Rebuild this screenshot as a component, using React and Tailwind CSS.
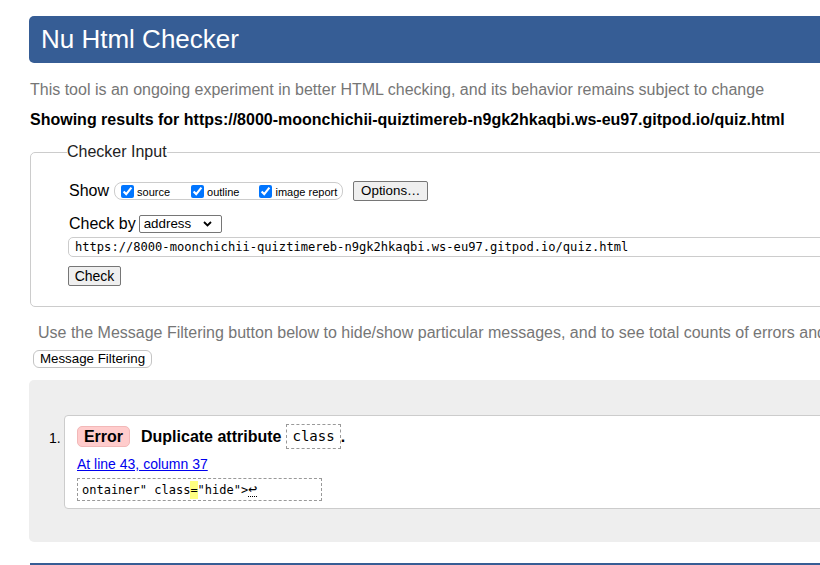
import React from "react";

const sans = { fontFamily: '"Liberation Sans", Arial, sans-serif' };
const mono = "font-['DejaVu_Sans_Mono','Liberation_Mono',monospace]";
const url = "https://8000-moonchichii-quiztimereb-n9gk2hkaqbi.ws-eu97.gitpod.io/quiz.html";

const Check = ({ label, className = "" }) => (
  <label className={`flex items-center ${className}`}>
    <input type="checkbox" defaultChecked className="h-[13px] w-[13px] accent-[#0075ff]" />
    <span className="ml-[3px] pt-[2px] text-[11px] leading-[13px] text-black">{label}</span>
  </label>
);

const NativeButton = ({ children, className = "" }) => (
  <button
    type="button"
    className={`flex h-[20px] items-center justify-center rounded-[2px] border border-[#767676] bg-[#efefef] text-[13.33px] text-black ${className}`}
  >
    {children}
  </button>
);

export default function App() {
  return (
    <div className="h-[565px] w-[820px] overflow-hidden bg-white text-black" style={sans}>
      <div className="ml-[29px] w-[920px]">
        {/* Title bar */}
        <h1 className="mt-[16px] flex h-[47px] items-center rounded-[5px] bg-[#365d95] pl-[12px] text-[26px] font-normal text-white">
          Nu Html Checker
        </h1>

        <p className="mt-[17px] ml-[1px] text-[16px] leading-[20px] text-[#767676]">
          This tool is an ongoing experiment in better HTML checking, and its behavior remains subject to change
        </p>
        <p className="mt-[10px] ml-[1px] text-[16px] font-bold leading-[20px] text-black">
          Showing results for {url}
        </p>

        {/* Checker input */}
        <fieldset className="mt-[13px] ml-[1px] rounded-[5px] border border-[#cccccc] pb-[20px] pl-[37px]">
          <legend className="-ml-[1px] text-[16px] leading-[18px] text-[#222]">Checker Input</legend>

          <div className="mt-[20px] flex h-[20px] items-center">
            <span className="ml-[1px] text-[16px] leading-[20px]">Show</span>
            <div className="ml-[5px] flex h-[18px] items-center rounded-[8px] border border-[#cccccc] pr-[5px] pl-[6px]">
              <Check label="source" />
              <Check label="outline" className="ml-[21px]" />
              <Check label="image report" className="ml-[20px]" />
            </div>
            <NativeButton className="ml-[10px] w-[75px]">Options…</NativeButton>
          </div>

          <div className="mt-[14px] flex h-[18px] items-center">
            <span className="ml-[1px] text-[16px] leading-[20px]">Check by</span>
            <div className="ml-[3px] flex h-[18px] w-[83px] items-center justify-between rounded-[2px] border border-[#767676] bg-white pr-[9px] pl-[4px] text-[13.33px]">
              <span>address</span>
              <svg width="9" height="6" viewBox="0 0 9 6" fill="none">
                <path d="M1 1 L4.5 4.5 L8 1" stroke="#000" strokeWidth="1.8" />
              </svg>
            </div>
          </div>

          <div className={`mt-[4px] flex h-[20px] items-center rounded-l-[5px] border border-[#cccccc] pl-[6px] text-[12.1px] ${mono}`}>
            {url}
          </div>

          <NativeButton className="mt-[9px] w-[53px] text-[14px]">Check</NativeButton>
        </fieldset>

        <p className="mt-[16px] ml-[9px] whitespace-nowrap text-[16px] leading-[20px] text-[#767676]">
          Use the Message Filtering button below to hide/show particular messages, and to see total counts of errors and warnings.
        </p>
        <button
          type="button"
          className="mt-[7px] ml-[4px] flex h-[18px] w-[119px] items-center justify-center rounded-[6px] border border-[#c4c4c4] bg-white text-[13.33px] text-black"
        >
          Message Filtering
        </button>

        {/* Results */}
        <div className="mt-[12px] h-[162px] rounded-[5px] bg-[#eeeeee] pt-[35px] pl-[35px]">
          <ol>
            <li className="flex">
              <span className="-ml-[15px] w-[15px] pt-[15px] text-[14px] leading-[16px]">1.</span>
              <div className="h-[94px] flex-1 rounded-l-[4px] border border-[#cccccc] bg-white pt-[8px] pl-[12px]">
                <div className="flex items-center">
                  <span className="flex h-[21px] w-[53px] items-center justify-center rounded-[5px] border border-[#f2b8b8] bg-[#ffcccc] text-[16px] font-bold">
                    Error
                  </span>
                  <span className="ml-[11px] text-[16px] font-bold">Duplicate attribute</span>
                  <code className={`ml-[5px] flex h-[25px] items-center border border-dashed border-[#999] px-[5px] text-[14px] ${mono}`}>
                    class
                  </code>
                  <span className="text-[16px] font-bold">.</span>
                </div>
                <a href="#" className="mt-[7px] block text-[14px] leading-[16px] text-[#0000ee] underline">
                  At line 43, column 37
                </a>
                <div className={`mt-[6px] flex h-[23px] w-[245px] items-center border border-dashed border-[#999] pl-[4px] text-[12px] ${mono}`}>
                  <span>ontainer" class</span>
                  <span className="bg-[#ffff80]">=</span>
                  <span>"hide"&gt;</span>
                  <span className="border-b border-dotted border-black text-[15px] leading-[14px]">↩</span>
                </div>
              </div>
            </li>
          </ol>
        </div>

        <div className="mt-[21px] ml-[1px] h-[2px] bg-[#365d95]" />
      </div>
    </div>
  );
}
